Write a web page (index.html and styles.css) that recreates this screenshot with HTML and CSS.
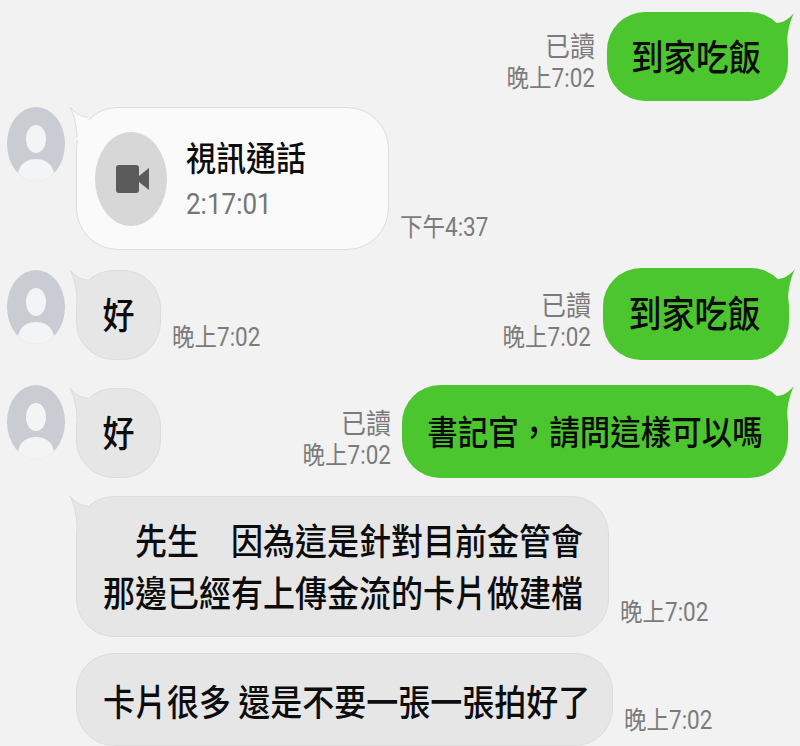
FILE: index.html
```html
<!DOCTYPE html>
<html lang="zh-Hant">
<head>
    <meta charset="UTF-8">
    <title>聊天記錄</title>
    <link rel="stylesheet" href="styles.css">
</head>
<body>
    <svg class="defs" width="0" height="0">
        <symbol id="avatar" viewBox="0 0 58 74">
            <ellipse cx="29" cy="37" rx="29" ry="37" fill="#c9ccd2"/>
            <ellipse cx="29" cy="32" rx="10" ry="14" fill="#f3f4f6"/>
            <path d="M11 66 C13 56 21 52 29 52 C37 52 45 56 47 66 C42 71 36 74 29 74 C22 74 16 71 11 66Z" fill="#f3f4f6"/>
        </symbol>
        <symbol id="tail" viewBox="0 0 24 34">
            <path d="M1 1 C6 7 12 11 19 11 L24 34 L8 34 C8 20 5 9 1 1Z" fill="currentColor" stroke="none"/>
            <path d="M19 11 C12 11 6 7 1 1 C5 9 8 20 8 32" fill="none"/>
        </symbol>
    </svg>

    <div class="chat">
        <div class="row row-first right">
            <div class="meta"><span class="read">已讀</span><span class="time">晚上7:02</span></div>
            <div class="bubble green home"><svg class="tail"><use href="#tail"/></svg><span class="msg">到家吃飯</span></div>
        </div>

        <div class="row row-call">
            <svg class="avatar"><use href="#avatar"/></svg>
            <div class="bubble white call">
                <svg class="tail"><use href="#tail"/></svg>
                <div class="call-icon">
                    <svg width="33" height="28" viewBox="0 0 33 28"><rect x="0" y="0" width="23" height="28" rx="3" fill="#5b5b5b"/><path d="M23 11 L33 3 V25 L23 17Z" fill="#5b5b5b"/></svg>
                </div>
                <div class="call-text">
                    <div class="call-title">視訊通話</div>
                    <div class="call-time">2:17:01</div>
                </div>
            </div>
            <div class="meta"><span class="time">下午4:37</span></div>
        </div>

        <div class="row row-three split">
            <div class="side">
                <svg class="avatar"><use href="#avatar"/></svg>
                <div class="bubble grey short"><svg class="tail"><use href="#tail"/></svg><span class="msg">好</span></div>
                <div class="meta"><span class="time">晚上7:02</span></div>
            </div>
            <div class="side">
                <div class="meta"><span class="read">已讀</span><span class="time">晚上7:02</span></div>
                <div class="bubble green home-two"><svg class="tail"><use href="#tail"/></svg><span class="msg">到家吃飯</span></div>
            </div>
        </div>

        <div class="row row-four split">
            <div class="side">
                <svg class="avatar"><use href="#avatar"/></svg>
                <div class="bubble grey short"><svg class="tail"><use href="#tail"/></svg><span class="msg">好</span></div>
            </div>
            <div class="side">
                <div class="meta"><span class="read">已讀</span><span class="time">晚上7:02</span></div>
                <div class="bubble green question"><svg class="tail"><use href="#tail"/></svg><span class="msg">書記官，請問這樣可以嗎</span></div>
            </div>
        </div>

        <div class="row row-five indent">
            <div class="bubble grey long"><svg class="tail"><use href="#tail"/></svg>
                <span class="msg first-line">先生　因為這是針對目前金管會</span>
                <span class="msg">那邊已經有上傳金流的卡片做建檔</span>
            </div>
            <div class="meta"><span class="time">晚上7:02</span></div>
        </div>

        <div class="row row-six indent">
            <div class="bubble grey last"><span class="msg">卡片很多 還是不要一張一張拍好了</span></div>
            <div class="meta"><span class="time">晚上7:02</span></div>
        </div>
    </div>
</body>
</html>
```

FILE: styles.css
```css
* {
    margin: 0;
    padding: 0;
    box-sizing: border-box;
}

html, body {
    height: 746px;
    overflow: hidden;
}

body {
    font-family: "Noto Sans CJK TC", "Noto Sans", sans-serif;
    background: #f2f2f2;
    color: #111;
}

.defs {
    position: absolute;
}

.chat {
    padding: 0 12px 0 7px;
}

.row {
    display: flex;
    align-items: flex-end;
}

.row-first { margin-top: 12px; height: 89px; }
.row-call { margin-top: 6px; height: 143px; }
.row-three { margin-top: 18px; height: 92px; }
.row-four { margin-top: 25px; height: 93px; }
.row-five { margin-top: 18px; height: 141px; }
.row-six { margin-top: 16px; height: 93px; }

.right {
    justify-content: flex-end;
}

.split {
    justify-content: space-between;
    align-items: stretch;
}

.indent {
    padding-left: 69px;
}

.side {
    display: flex;
    align-items: flex-end;
}

.avatar {
    width: 58px;
    height: 74px;
    flex: none;
    align-self: flex-start;
    margin-right: 11px;
}

.row-three .avatar { margin-top: 2px; }

.bubble {
    position: relative;
    height: 100%;
    display: flex;
    align-items: center;
    border-radius: 38px;
    border: 1px solid transparent;
    flex: none;
}

.green {
    background: #4cc62e;
    color: #4cc62e;
    justify-content: center;
}

.grey {
    background: #e6e6e6;
    border-color: #dcdcdc;
    color: #e6e6e6;
}

.white {
    background: #fafafa;
    border-color: #dddddd;
    color: #fafafa;
}

.tail {
    position: absolute;
    top: -2px;
    left: -8px;
    width: 24px;
    height: 34px;
}

.grey .tail { stroke: #dcdcdc; }
.white .tail { stroke: #dddddd; }

.green .tail {
    left: auto;
    right: -8px;
    top: -1px;
    transform: scaleX(-1);
}

.msg {
    display: block;
    color: #0c0c0c;
    font-size: 32px;
    font-weight: 500;
    line-height: 42px;
    white-space: pre;
    transform: translateY(-2px) scaleY(1.12);
}

.home { width: 181px; }
.home .msg { font-size: 32.5px; padding-right: 3px; }
.home-two { width: 186px; margin-right: -1px; }
.home-two .msg { font-size: 33px; padding-right: 3px; }
.question { width: 386px; }
.question .msg { font-size: 30.5px; }

.short {
    width: 85px;
    justify-content: center;
    height: 90px;
}

.row-four .short { margin-top: 2px; }

.call {
    width: 313px;
    padding-left: 18px;
    border-radius: 42px;
}

.call-icon {
    width: 72px;
    height: 94px;
    border-radius: 50%;
    background: #d7d7d7;
    display: flex;
    align-items: center;
    justify-content: center;
    padding-left: 3px;
    flex: none;
}

.call-text {
    margin-left: 19px;
}

.call-title {
    font-size: 30px;
    font-weight: 500;
    line-height: 42px;
    color: #0c0c0c;
    transform: scaleY(1.12);
}

.call-time {
    font-family: "Roboto", sans-serif;
    font-size: 26px;
    line-height: 36px;
    color: #757575;
    margin-top: 9px;
    transform: scaleY(1.12);
}

.long {
    width: 533px;
    flex-direction: column;
    align-items: flex-start;
    justify-content: center;
    padding-left: 26px;
}

.first-line {
    padding-left: 32px;
    margin-bottom: 10px;
}

.last {
    width: 537px;
    padding: 4px 0 0 26px;
}

.meta {
    display: flex;
    flex-direction: column;
    align-items: flex-end;
    flex: none;
    color: #7b7b7b;
    font-family: "Roboto", "Noto Sans CJK TC", sans-serif;
    line-height: 30px;
    margin: 0 12px 8px 11px;
}

.read {
    font-size: 25px;
    transform: scaleY(1.12);
}

.time {
    font-size: 22.5px;
    transform: scaleY(1.12);
}

.row-four .meta {
    margin-right: 11px;
}

.row-five .meta {
    margin-bottom: 10px;
}

.row-six .meta {
    margin-bottom: 11px;
}
```
